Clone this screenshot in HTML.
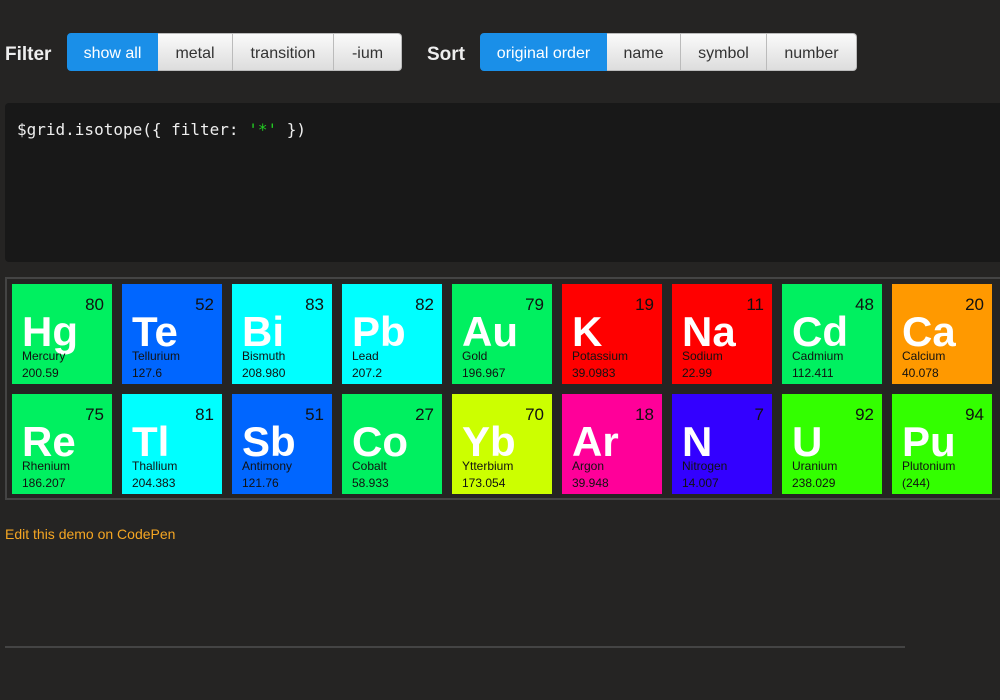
<!DOCTYPE html>
<html><head><style>
body{margin:0;background:#252423;width:1000px;height:700px;overflow:hidden;font-family:"Liberation Sans",sans-serif;position:relative}
.lbl{position:absolute;top:44px;color:#eee;font-weight:bold;font-size:19px}
.bg{position:absolute;top:33px;height:38px;display:flex}
.bg div{box-sizing:border-box;height:38px;line-height:40px;text-align:center;font-size:16px;color:#333;background:linear-gradient(#fafafa,#ddd);border:1px solid #bbb;border-left:none}
.bg div:first-child{border-radius:4px 0 0 4px;border-left:1px solid #bbb}
.bg div:last-child{border-radius:0 4px 4px 0}
.bg div.on{background:#1a8fe8;color:#fff;border-color:#1a8fe8}
.code{position:absolute;left:5px;top:103px;width:995px;height:159px;background:#181818;border-radius:4px 0 0 4px}
.code span{position:absolute;left:12px;top:17px;font-family:"DejaVu Sans Mono","Liberation Mono",monospace;font-size:16px;color:#eee}
.grid{position:absolute;left:5px;top:277px;width:1000px;height:223px;border:2px solid #444;box-sizing:border-box}
.el{position:absolute;width:100px;height:100px;color:#111}
.el .n{position:absolute;right:8px;top:11px;font-size:17px}
.el .s{position:absolute;left:10px;top:24px;font-size:42px;font-weight:bold;color:#fff}
.el .nm{position:absolute;left:10px;top:65px;font-size:12px}
.el .w{position:absolute;left:10px;top:82px;font-size:12px}
</style></head><body>
<div class="lbl" style="left:5px">Filter</div>
<div class="bg" style="left:67px"><div class="on" style="width:91px">show all</div><div style="width:75px">metal</div><div style="width:101px">transition</div><div style="width:68px">-ium</div></div>
<div class="lbl" style="left:427px">Sort</div>
<div class="bg" style="left:480px"><div class="on" style="width:127px">original order</div><div style="width:74px">name</div><div style="width:86px">symbol</div><div style="width:90px">number</div></div>
<div class="code"><span>$grid.isotope({ filter: <b style="color:#2c2;font-weight:normal">'*'</b> })</span></div>
<div class="grid"></div>
<div id="g"></div>
<div style="position:absolute;left:5px;top:526px;color:#f5a623;font-size:14px">Edit this demo on CodePen</div>
<div style="position:absolute;left:5px;top:646px;width:900px;height:2px;background:#444"></div>
<script>
var d=[["Hg",80,"Mercury","200.59","#00f060"],["Te",52,"Tellurium","127.6","#0066ff"],["Bi",83,"Bismuth","208.980","#00ffff"],["Pb",82,"Lead","207.2","#00ffff"],["Au",79,"Gold","196.967","#00f060"],["K",19,"Potassium","39.0983","#ff0000"],["Na",11,"Sodium","22.99","#ff0000"],["Cd",48,"Cadmium","112.411","#00f060"],["Ca",20,"Calcium","40.078","#ff9900"],
["Re",75,"Rhenium","186.207","#00f060"],["Tl",81,"Thallium","204.383","#00ffff"],["Sb",51,"Antimony","121.76","#0066ff"],["Co",27,"Cobalt","58.933","#00f060"],["Yb",70,"Ytterbium","173.054","#ccff00"],["Ar",18,"Argon","39.948","#ff0099"],["N",7,"Nitrogen","14.007","#3300ff"],["U",92,"Uranium","238.029","#33ff00"],["Pu",94,"Plutonium","(244)","#33ff00"]];
var h="";d.forEach(function(e,i){var x=12+(i%9)*110,y=284+Math.floor(i/9)*110;
h+='<div class="el" style="left:'+x+'px;top:'+y+'px;background:'+e[4]+'"><div class="n">'+e[1]+'</div><div class="s">'+e[0]+'</div><div class="nm">'+e[2]+'</div><div class="w">'+e[3]+'</div></div>';});
document.getElementById("g").innerHTML=h;
</script>
</body></html>
